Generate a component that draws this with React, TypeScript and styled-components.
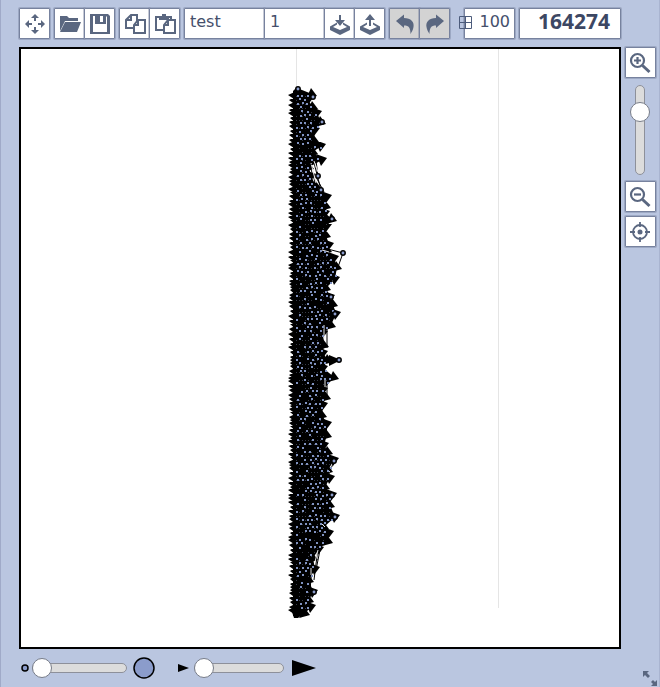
import React, { useState } from "react";
import styled, { createGlobalStyle } from "styled-components";

const ink = "#5a6780";

const GlobalStyle = createGlobalStyle`
  * { box-sizing: border-box; }
  body { margin: 0; background: #bac6e0; }
  button, input { font-family: "DejaVu Sans", Verdana, sans-serif; }
`;

const Editor = styled.main`
  min-height: 100vh;
  display: flex;
  flex-direction: column;
  padding-left: 18px;
  background: #bac6e0;
  border-left: 1px solid #a0aac8;
  border-right: 1px solid #a9b4d0;
`;

const Toolbar = styled.header`
  display: flex;
  gap: 4px;
  padding: 8px 38px 8px 0;
`;

const Group = styled.div`
  display: flex;
  > * + * { margin-left: -1px; }
`;

const edge = `
  height: 31px;
  border: 1px solid #77829e;
  border-radius: 1px;
  box-shadow: 0 0 0 1px rgba(112, 123, 152, 0.4);
  background: #fff;
`;

const IconButton = styled.button`
  ${edge}
  width: 31px;
  flex: none;
  padding: 0;
  display: grid;
  place-items: center;
  color: ${ink};
  cursor: pointer;
  &:disabled { background: #d3d3d3; cursor: default; }
`;

const Field = styled.input<{ $width: number }>`
  ${edge}
  width: ${(p) => p.$width}px;
  padding: 0 5px 4px;
  font-size: 16px;
  color: #454f6b;
  outline: none;
`;

const GridField = styled.label`
  ${edge}
  position: relative;
  width: 51px;
  margin-left: 10px;
  display: flex;
  input {
    width: 100%;
    border: 0;
    padding: 0 4px 4px 0;
    text-align: right;
    font-size: 16px;
    color: #454f6b;
    background: transparent;
    outline: none;
  }
  svg { position: absolute; left: -6px; top: 7px; }
`;

const Score = styled.output`
  ${edge}
  flex: 1;
  padding-right: 10px;
  text-align: right;
  font: bold 21px/24px "Noto Sans", "Open Sans", sans-serif;
  color: #3c4763;
`;

const Workspace = styled.div`
  display: flex;
  align-items: flex-start;
`;

const Board = styled.div`
  flex: 1;
  min-width: 0;
  border: 2px solid #000;
  background: #fff;
  svg { display: block; width: 100%; }
`;

const Side = styled.aside`
  width: 38px;
  display: flex;
  flex-direction: column;
  align-items: center;
  gap: 4px;
`;

const Range = styled.input<{ $length: number; $vertical?: boolean }>`
  appearance: none;
  margin: ${(p) => (p.$vertical ? "3px 0 2px" : "0 3px 0 0")};
  width: ${(p) => (p.$vertical ? 20 : p.$length)}px;
  height: ${(p) => (p.$vertical ? p.$length : 20)}px;
  background: transparent;
  ${(p) => p.$vertical && "writing-mode: vertical-lr; direction: rtl;"}
  &::-webkit-slider-runnable-track {
    ${(p) => (p.$vertical ? "width: 10px; height: 100%;" : "height: 10px; width: 100%;")}
    border: 1px solid #8d909a;
    border-radius: 5px;
    background: #dcdcdc;
  }
  &::-webkit-slider-thumb {
    appearance: none;
    width: 20px;
    height: 20px;
    margin: ${(p) => (p.$vertical ? "0 -6px" : "-6px -1px")};
    border: 1px solid #777c88;
    border-radius: 50%;
    background: #fff;
  }
`;

const Footer = styled.footer`
  flex: 1;
  display: flex;
  align-items: flex-start;
  padding-top: 7px;
`;

const Sizes = styled.div<{ $before: number; $gap: number }>`
  display: flex;
  align-items: center;
  height: 24px;
  margin-left: ${(p) => p.$before}px;
  gap: ${(p) => p.$gap}px;
  svg { flex: none; }
`;

const ResizeButton = styled.button`
  margin-left: auto;
  align-self: flex-end;
  width: 18px;
  height: 18px;
  padding: 0;
  border: 0;
  background: none;
  color: ${ink};
`;

const Icon = ({ children }: { children: React.ReactNode }) => (
  <svg width="24" height="24" viewBox="0 0 24 24" fill="currentColor" aria-hidden="true">{children}</svg>
);

const tray = (
  <path fillRule="evenodd" d="M9 10.500L2 14.500V18l10 5 10-5v-3.500l-7-4v2l4 2.500-7 3-7-3 4-2.500z" />
);

const icons = {
  move: <path d="M12 2l4 4h-3v3h-2V6H8zM12 22l-4-4h3v-3h2v3h3zM2 12l4-4v3h3v2H6v3zM22 12l-4 4v-3h-3v-2h3V8z" />,
  open: <><path d="M2 4h7l2 2h9v3H7L2 19z" /><path d="M7 10h16l-4 10H2z" /></>,
  save: <path fillRule="evenodd" d="M2 2h18l2 2v18H2zM5 5v15h14V5l-1-1v8H7V4H5zM12 4v6h3V4z" />,
  copy: (
    <g fill="#fff" stroke="currentColor" strokeWidth="2">
      <path d="M8 3h6v13H3V8z" />
      <path d="M8 3v5H3" fill="none" />
      <path d="M15 8h7v13H11v-8z" />
      <path d="M15 8v5h-4" fill="none" />
    </g>
  ),
  paste: (
    <g fill="#fff" stroke="currentColor" strokeWidth="2">
      <path d="M3 5h15v13H3z" />
      <path d="M6 4h3V2h4v2h3v4H6z" fill="currentColor" stroke="none" />
      <path d="M15 8h7v13H11v-8z" />
      <path d="M15 8v5h-4" fill="none" />
    </g>
  ),
  load: <><path d="M11 3h2v5h4l-5 6-5-6h4z" />{tray}</>,
  unload: <><path d="M12 2l5 6h-4v6h-2V8H7z" />{tray}</>,
  undo: <path d="M3 9L11 2.500V6c7 .2 10.500 4 9.500 9-.3 3-2 5-3 7 0-6-1.500-8.500-6.500-8.500V16z" />,
  redo: <path d="M21 9L13 2.500V6C6 6.200 2.500 10 3.500 15c.3 3 2 5 3 7 0-6 1.500-8.500 6.500-8.500V16z" />,
  target: (
    <g fill="none" stroke="currentColor" strokeWidth="1.800">
      <circle cx="12" cy="12" r="7" />
      <path d="M12 2v5M12 17v5M2 12h5M17 12h5" />
      <circle cx="12" cy="12" r="2.500" fill="currentColor" stroke="none" />
    </g>
  ),
};

const Magnifier = ({ plus }: { plus?: boolean }) => (
  <Icon>
    <g fill="none" stroke="currentColor">
      <circle cx="9.500" cy="9.500" r="6.500" strokeWidth="2.200" />
      <path d={plus ? "M6 9.500h7M9.500 6v7" : "M6 9.500h7"} strokeWidth="2.200" />
      <path d="M14.500 14.500l7 6.500" strokeWidth="3" />
    </g>
  </Icon>
);

/* Outermost x of the graph at each y. */
const outline: [number, number][] = [
  [88, 301], [94, 316], [100, 312], [107, 317], [113, 321], [122, 325], [130, 319], [140, 318],
  [146, 325], [152, 317], [160, 326], [167, 313], [176, 315], [186, 320], [197, 331], [206, 330],
  [213, 329], [219, 336], [226, 331], [235, 330], [245, 333], [250, 331], [258, 338], [267, 341],
  [279, 339], [288, 330], [297, 334], [304, 337], [314, 340], [325, 335], [333, 327], [345, 328],
  [353, 327], [360, 332], [368, 327], [377, 338], [390, 327], [397, 330], [405, 327], [415, 326],
  [424, 331], [435, 331], [445, 328], [452, 332], [460, 338], [470, 332], [478, 334], [487, 329],
  [495, 336], [505, 334], [517, 339], [527, 328], [533, 333], [541, 332], [549, 323], [558, 317],
  [569, 319], [580, 313], [592, 317], [600, 313], [607, 315], [613, 309],
];

const edgeAt = (y: number) => {
  for (let i = 1; i < outline.length; i++) {
    const [y0, x0] = outline[i - 1];
    const [y1, x1] = outline[i];
    if (y <= y1) return x0 + ((x1 - x0) * (y - y0)) / (y1 - y0);
  }
  return 309;
};

const makeRandom = (seed: number) => () => {
  seed = (seed * 1664525 + 1013904223) % 4294967296;
  return seed / 4294967296;
};

const buildGraph = () => {
  const random = makeRandom(7);
  let body = "M293 91L296 88";
  outline.forEach(([y, x]) => { body += `L${x - 4} ${y}`; });
  body += "L307 616L293 616Z";
  let arrows = "";
  for (let y = 96; y < 612; y += 3 + Math.floor(random() * 3)) {
    const reach = 288 + Math.floor(random() * 3);
    arrows += `M${reach} ${y - 1}L297 ${y - 5}V${y + 5}Z`;
  }
  outline.slice(1).forEach(([y, x], i) => {
    arrows += i % 2
      ? `M${x + 1} ${y - 2}L${x - 10} ${y - 6}L${x - 5} ${y + 6}Z`
      : `M${x + 1} ${y + 2}L${x - 5} ${y - 6}L${x - 10} ${y + 5}Z`;
  });
  const nodes: [number, number][] = [];
  const links: [number, number][] = [];
  for (let y = 94; y < 610; y += 4) {
    const limit = edgeAt(y) - 5;
    for (let x = 296 + (y % 8 === 6 ? 0 : 3); x < limit; x += 5) {
      if (random() < 0.62) nodes.push([x + Math.floor(random() * 2), y + Math.floor(random() * 2)]);
    }
    for (let x = 296; x < limit - 2; x += 3) {
      if (random() < 0.5) links.push([x, y + 2]);
    }
  }
  return { body, arrows, nodes, links };
};

const graph = buildGraph();
const outerNodes = [
  [298, 89], [313, 97], [322, 122], [318, 176], [332, 219], [343, 253], [335, 314],
  [339, 360], [331, 297], [334, 461], [332, 495], [335, 517], [314, 592], [321, 190],
];

const Graph = () => (
  <svg viewBox="21 49 598 598" role="img" aria-label="Network drawing">
    <path d="M296.500 49V608M498.500 49V608" stroke="#e5e5e5" fill="none" />
    <path d="M312 155L321 190M315 153L318 176M316 177L324 192M308 160L317 188M320 247L343 253L338 267M327 328V348M327 375V395M323 360L339 360M319 518L328 530M318 548L314 580M321 545L316 570M313 556L310 590M329 474L334 461" stroke="#000" fill="none" />
    <path d={graph.body} />
    <path d={graph.arrows} />
    <path d="M329 355L341 360L329 366ZM291 609L309 609L298 618H294Z" />
    <path d="M311 163L316 183M314 161L318 172M324 325V338M325 378V387M321 523L325 527M318 550L315 562M311 568V575M322 250L329 252M327 470L330 472" stroke="#e7e7e7" fill="none" />
    {graph.links.map(([x, y], i) => <rect key={i} x={x} y={y} width="1" height="1" fill="#363b48" />)}
    {graph.nodes.map(([x, y], i) => <rect key={i} x={x} y={y} width="2" height="2" fill="#7f91bf" />)}
    {outerNodes.map(([x, y]) => <circle key={y} cx={x} cy={y} r="2.200" fill="#8b9ccb" stroke="#000" strokeWidth="1.500" />)}
  </svg>
);

export default function App() {
  const [name, setName] = useState("test");
  const [index, setIndex] = useState("1");
  const [grid, setGrid] = useState("100");

  return (
    <>
      <GlobalStyle />
      <Editor>
        <Toolbar>
          <Group><IconButton aria-label="Move"><Icon>{icons.move}</Icon></IconButton></Group>
          <Group>
            <IconButton aria-label="Open"><Icon>{icons.open}</Icon></IconButton>
            <IconButton aria-label="Save"><Icon>{icons.save}</Icon></IconButton>
          </Group>
          <Group>
            <IconButton aria-label="Copy"><Icon>{icons.copy}</Icon></IconButton>
            <IconButton aria-label="Paste"><Icon>{icons.paste}</Icon></IconButton>
          </Group>
          <Group>
            <Field $width={81} aria-label="Name" value={name} onChange={(e) => setName(e.target.value)} />
            <Field $width={61} aria-label="Index" value={index} onChange={(e) => setIndex(e.target.value)} />
            <IconButton aria-label="Load"><Icon>{icons.load}</Icon></IconButton>
            <IconButton aria-label="Unload"><Icon>{icons.unload}</Icon></IconButton>
          </Group>
          <Group>
            <IconButton aria-label="Undo" disabled><Icon>{icons.undo}</Icon></IconButton>
            <IconButton aria-label="Redo" disabled><Icon>{icons.redo}</Icon></IconButton>
          </Group>
          <GridField>
            <svg width="13" height="13" viewBox="0 0 13 13" fill="none" stroke="#4d5c7c" aria-hidden="true">
              <path d="M.5 .5h12v12H.5zM6.500 .5v12M.5 6.500h12" />
            </svg>
            <input aria-label="Grid size" value={grid} onChange={(e) => setGrid(e.target.value)} />
          </GridField>
          <Score>164274</Score>
        </Toolbar>
        <Workspace>
          <Board><Graph /></Board>
          <Side>
            <IconButton aria-label="Zoom in"><Magnifier plus /></IconButton>
            <Range type="range" aria-label="Zoom" $length={90} $vertical defaultValue={76} />
            <IconButton aria-label="Zoom out"><Magnifier /></IconButton>
            <IconButton aria-label="Center"><Icon>{icons.target}</Icon></IconButton>
          </Side>
        </Workspace>
        <Footer>
          <Sizes $before={2} $gap={3}>
            <svg width="8" height="8"><circle cx="4" cy="4" r="3" fill="#8b9ccb" stroke="#000" strokeWidth="1.500" /></svg>
            <Range type="range" aria-label="Node size" $length={95} defaultValue={0} />
            <svg width="22" height="22"><circle cx="11" cy="11" r="10" fill="#8b9ccb" stroke="#000" strokeWidth="1.500" /></svg>
          </Sizes>
          <Sizes $before={23} $gap={5}>
            <svg width="11" height="8"><path d="M0 0L11 4L0 8z" /></svg>
            <Range type="range" aria-label="Arrow size" $length={90} defaultValue={0} />
            <svg width="24" height="16"><path d="M0 0L24 8L0 16z" /></svg>
          </Sizes>
          <ResizeButton aria-label="Resize">
            <svg width="18" height="18" viewBox="0 0 18 18" fill="currentColor" aria-hidden="true">
              <path d="M2 2h6L6 4l3 3-2 2-3-3-2 2zM16 17h-6l2-2-2-2 2-2 2 2 2-2z" />
            </svg>
          </ResizeButton>
        </Footer>
      </Editor>
    </>
  );
}
